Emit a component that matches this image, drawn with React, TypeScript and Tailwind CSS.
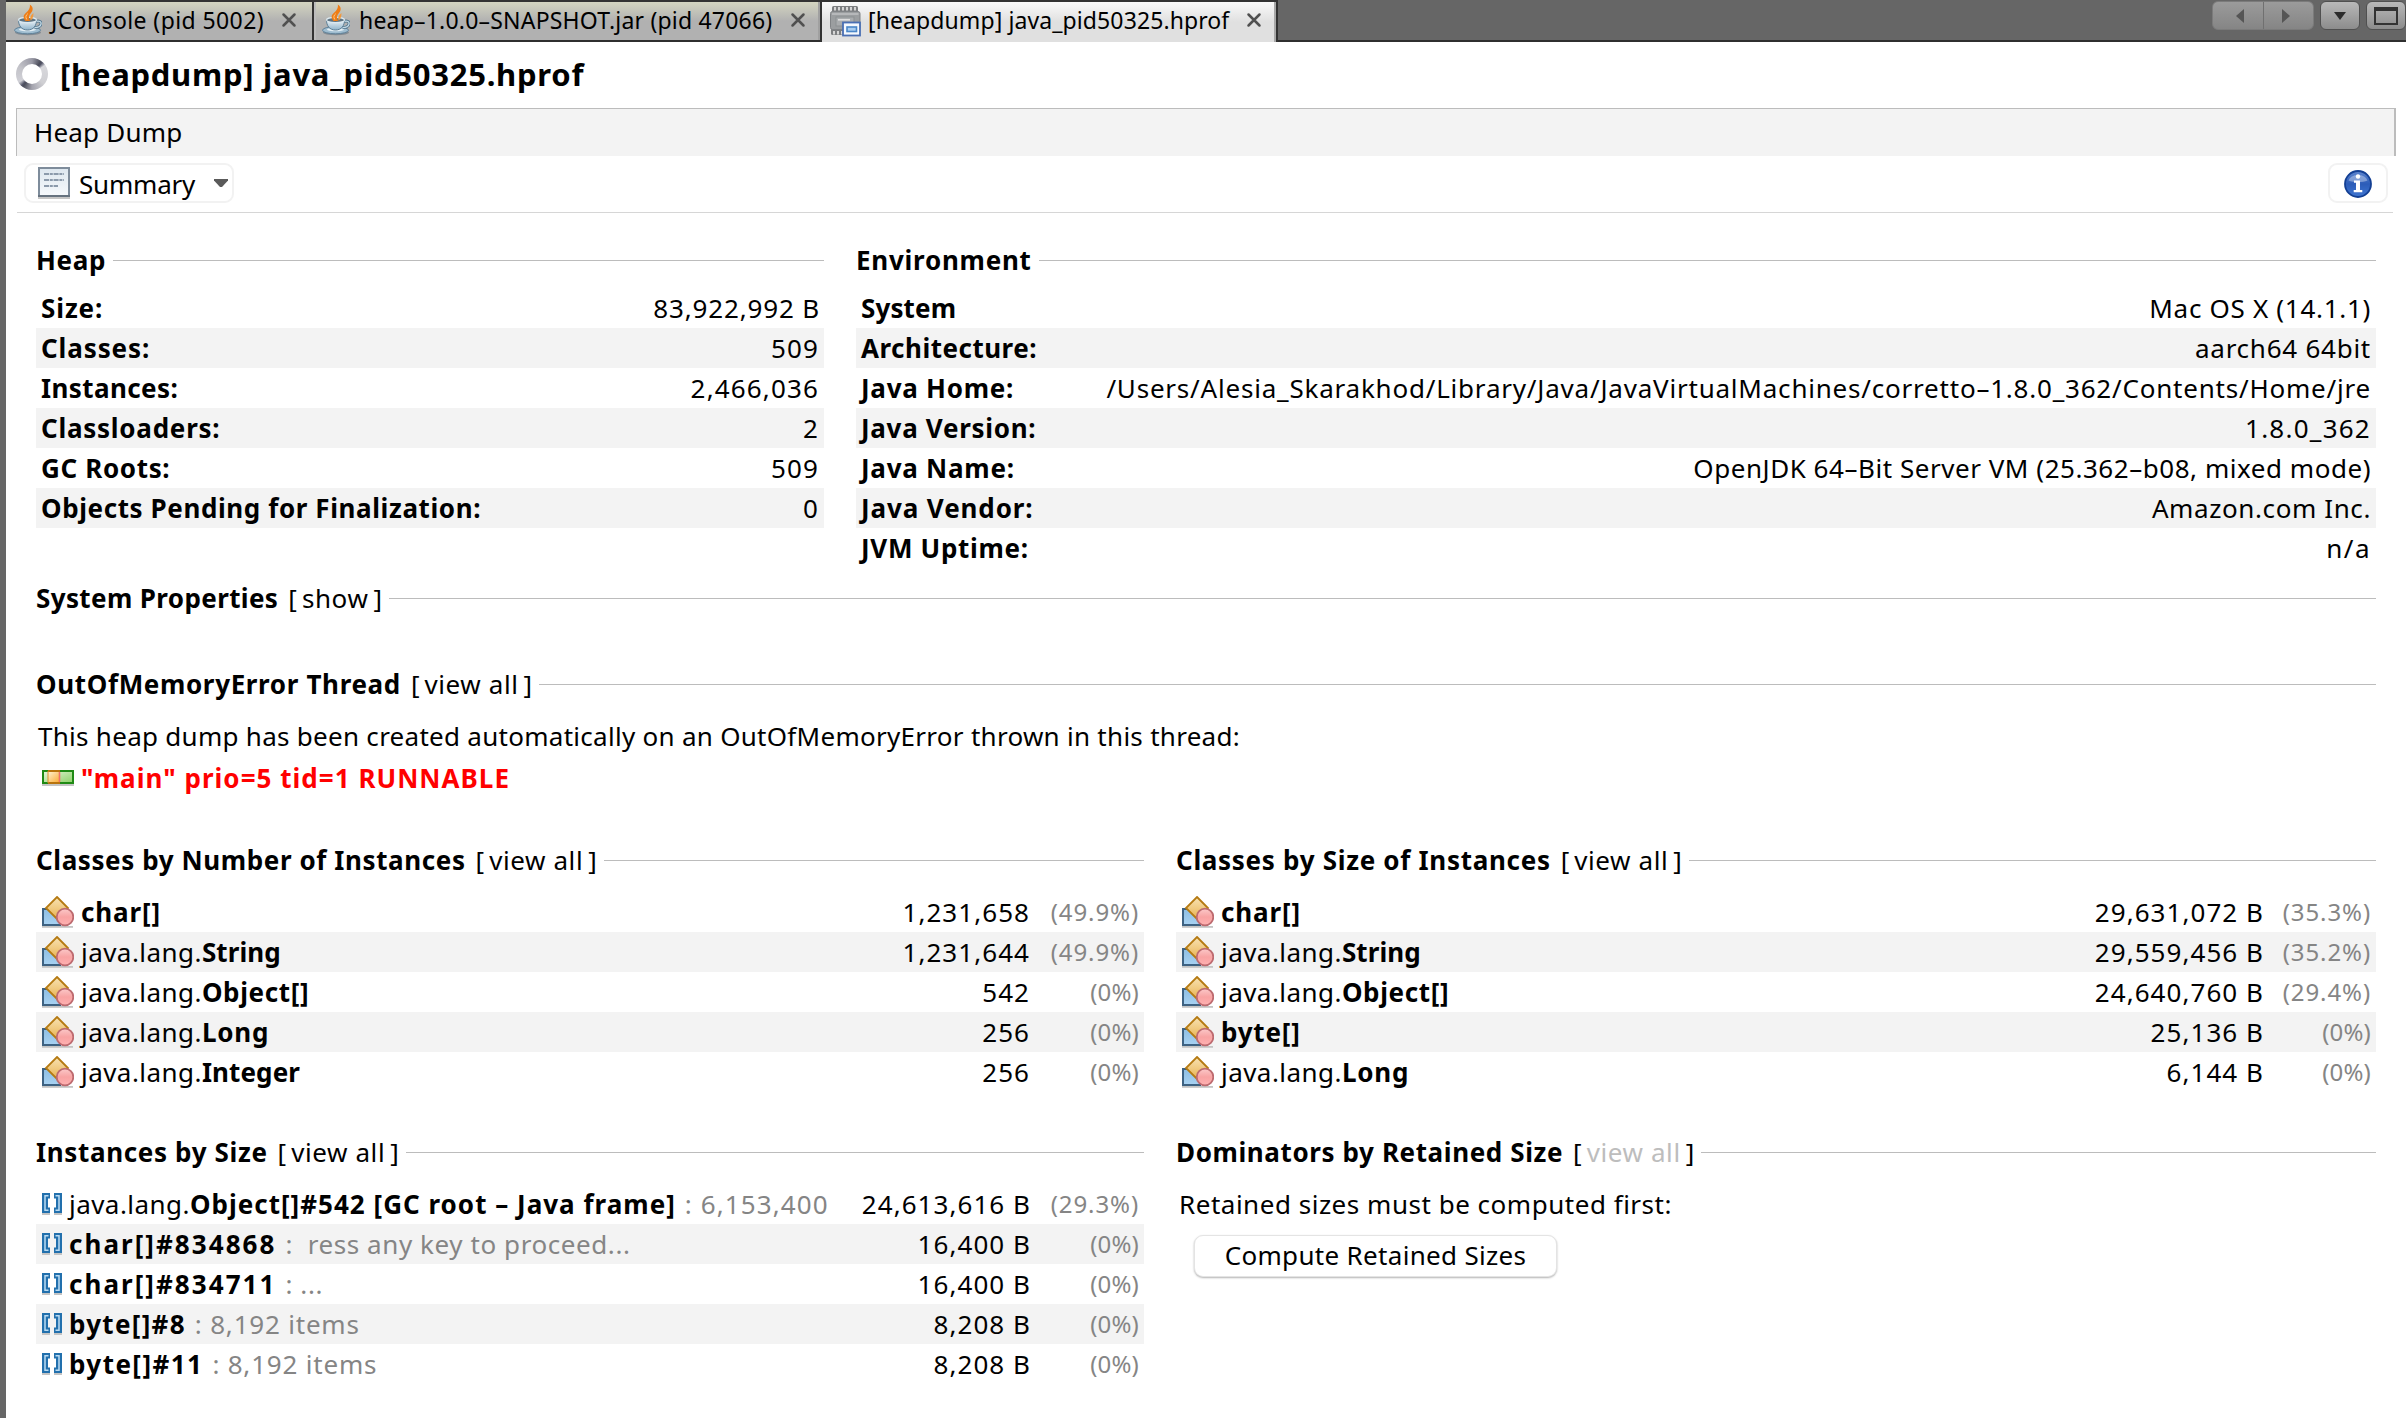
import type { ReactNode } from "react";

/* ---------- icons ---------- */

function JavaCup({ className = "" }: { className?: string }) {
  return (
    <svg width="28" height="32" viewBox="0 0 28 32" className={"shrink-0 " + className}>
      <defs>
        <linearGradient id="cup" x1="0" y1="0" x2="0" y2="1">
          <stop offset="0" stopColor="#eef5f9" />
          <stop offset="1" stopColor="#8fb4cb" />
        </linearGradient>
      </defs>
      <ellipse cx="14" cy="28.4" rx="13" ry="2.8" fill="#6f7b84" opacity="0.7" />
      <ellipse cx="13.5" cy="26.2" rx="13" ry="3.6" fill="#9fbdd0" stroke="#5f8199" strokeWidth="1" />
      <ellipse cx="13.5" cy="25.4" rx="8.5" ry="1.8" fill="#e3eef4" />
      <path d="M21.5 17.5c4-1.2 6 .2 5.5 2.6-.4 2-3 3.4-6.5 3.6" fill="none" stroke="#55788f" strokeWidth="3" />
      <path d="M21.5 17.5c4-1.2 6 .2 5.5 2.6-.4 2-3 3.4-6.5 3.6" fill="none" stroke="#c3dae7" strokeWidth="1.3" />
      <path d="M4.5 16c0 5.5 2.8 10 9 10s9-4.5 9-10z" fill="url(#cup)" stroke="#5d7f96" strokeWidth="1" />
      <ellipse cx="13.5" cy="16" rx="9" ry="2.6" fill="#5f7483" stroke="#dbe8ef" strokeWidth="1.2" />
      <path d="M11.5 17c-2.8-3.2-2.3-6 .8-8.4C14.5 6.8 16.5 3.8 15.800.6c3.8 2.2 3.6 6 .8 9-1.8 2-2.2 4-.6 7.400z" fill="#ee7d16" />
      <path d="M16.8 16.8c-1.4-2.8-.6-5 2.600-7.800.2 2.400-.2 5.200-2.600 7.800z" fill="#f39a3c" />
      <path d="M12.800 15.500c-1.600-2.300-1-4.300 1-5.800" fill="none" stroke="#fbc98a" strokeWidth="1" />
    </svg>
  );
}

function HeapChip() {
  return (
    <svg width="31" height="31" viewBox="0 0 31 31" className="shrink-0">
      <rect x="2" y="0" width="26" height="7" rx="1.5" fill="#7c7e80" />
      {[4, 8, 12, 16, 20, 24].map((x) => (
        <rect key={x} x={x} y="1" width="2" height="3.500" fill="#d6d6d6" />
      ))}
      <rect x="1" y="22" width="26" height="7" rx="1.5" fill="#7c7e80" />
      {[3, 7, 11].map((x) => (
        <rect key={x} x={x} y="25" width="2" height="3.500" fill="#d6d6d6" />
      ))}
      <rect x="0.5" y="5.5" width="29.5" height="18" rx="2" fill="#9b9ea0" stroke="#808386" />
      <rect x="2" y="7" width="26.5" height="2" fill="#b6b8ba" />
      <rect x="6" y="11" width="18" height="9" fill="#a9acae" stroke="#8c8f91" />
      <rect x="8" y="13" width="12" height="1.6" fill="#dcdcdc" />
      <rect x="13" y="16.500" width="17" height="13" fill="#f4f8fd" stroke="#4a6fb3" strokeWidth="1.8" />
      <rect x="17" y="21" width="9.500" height="4.500" fill="#a9cdf0" stroke="#4a86c8" strokeWidth="1.6" />
    </svg>
  );
}

function CloseX({ className = "" }: { className?: string }) {
  return (
    <svg width="16" height="16" viewBox="0 0 16 16" className={"shrink-0 " + className}>
      <path d="M2.500 2.500l11 11M13.500 2.500l-11 11" stroke="#505050" strokeWidth="2.5" strokeLinecap="round" />
    </svg>
  );
}

function SummaryIcon() {
  return (
    <svg width="32" height="32" viewBox="0 0 32 32" className="shrink-0">
      <defs>
        <linearGradient id="page" x1="0" y1="0" x2="0" y2="1">
          <stop offset="0" stopColor="#dde7ef" />
          <stop offset="1" stopColor="#f6f9fc" />
        </linearGradient>
      </defs>
      <rect x="0" y="30" width="32" height="2" fill="#c6c6c6" />
      <rect x="1" y="1" width="30" height="28" fill="url(#page)" stroke="#7e8c9b" strokeWidth="2" />
      <path d="M0 29h32" stroke="#66727f" strokeWidth="2" />
      <path d="M6 7h20M6 13h20M6 19h14" stroke="#8b9aab" strokeWidth="2" strokeDasharray="5 .8 3 .8" />
    </svg>
  );
}

function InfoIcon() {
  return (
    <svg width="28" height="28" viewBox="0 0 28 28">
      <defs>
        <linearGradient id="info" x1="0" y1="0" x2="0" y2="1">
          <stop offset="0" stopColor="#5f86cf" />
          <stop offset="0.5" stopColor="#2c5cb8" />
          <stop offset="1" stopColor="#3f76d2" />
        </linearGradient>
      </defs>
      <circle cx="14" cy="14" r="13" fill="url(#info)" stroke="#133f93" strokeWidth="1.8" />
      <path d="M4.5 10.5a10 8 0 0 1 19 0c-5 2-14 2-19 0z" fill="#fff" opacity="0.35" />
      <circle cx="14" cy="6.5" r="2.2" fill="#fff" />
      <path d="M10 10.5h6v9.500h2.300v2.300H9.700V20H12v-7.200h-2z" fill="#fff" />
    </svg>
  );
}

function ClassIcon() {
  return (
    <svg width="32" height="32" viewBox="0 0 32 32" className="shrink-0">
      <defs>
        <linearGradient id="sq" x1="0" y1="0" x2="0" y2="1">
          <stop offset="0" stopColor="#8fbfe3" />
          <stop offset="1" stopColor="#a8d2f2" />
        </linearGradient>
        <linearGradient id="dia" x1="0" y1="0" x2="0" y2="1">
          <stop offset="0" stopColor="#f8e3b4" />
          <stop offset="1" stopColor="#e9b250" />
        </linearGradient>
        <linearGradient id="cir" x1="0" y1="0" x2="0" y2="1">
          <stop offset="0" stopColor="#fbc9c9" />
          <stop offset="0.5" stopColor="#f8a3a3" />
          <stop offset="1" stopColor="#ffb1b1" />
        </linearGradient>
      </defs>
      <path d="M0 30h31v1.800H0z" fill="#c4c4c4" />
      <rect x="1" y="13" width="17" height="16" fill="url(#sq)" stroke="#3d6282" strokeWidth="2" />
      <path d="M15 1L26 12 15 23 4 12z" fill="url(#dia)" stroke="#b57a12" strokeWidth="1.8" />
      <circle cx="23" cy="21" r="8.3" fill="url(#cir)" stroke="#bd6a6f" strokeWidth="1.8" />
    </svg>
  );
}

function ArrayIcon() {
  return (
    <svg width="20" height="22" viewBox="0 0 20 22" className="shrink-0">
      <path d="M0 20h8v2H0zM12 20h8v2h-8z" fill="#c4c4c4" />
      <path d="M0 0h8v5.500H6v9h2V20H0zM20 0h-8v5.500h2v9h-2V20h8z" fill="#2270ad" />
      <path d="M6.500 2.700H3v14.600h3.500M13.500 2.700H17v14.600h-3.500" fill="none" stroke="#bcdcf3" strokeWidth="1.5" />
    </svg>
  );
}

function ThreadIcon() {
  return (
    <svg width="32" height="16" viewBox="0 0 32 16" className="shrink-0">
      <defs>
        <linearGradient id="thr" x1="0" y1="0" x2="1" y2="1">
          <stop offset="0" stopColor="#e6f7dc" />
          <stop offset="1" stopColor="#8bd067" />
        </linearGradient>
        <linearGradient id="org" x1="0" y1="0" x2="1" y2="1">
          <stop offset="0" stopColor="#fff0cf" />
          <stop offset="1" stopColor="#fbaf3a" />
        </linearGradient>
      </defs>
      <path d="M0 14h32v2H0z" fill="#c4c4c4" />
      <rect x="1" y="1" width="30" height="12" fill="url(#thr)" stroke="#1f8a14" strokeWidth="2" />
      <rect x="6" y="2" width="11" height="10" fill="url(#org)" />
      <path d="M6 1h12M6 13h12" stroke="#b8730c" strokeWidth="2" />
      <path d="M6 1v12" stroke="#d9912c" strokeWidth="1" />
      <path d="M17.500 2v10" stroke="#f0706a" strokeWidth="1.6" />
    </svg>
  );
}

/* ---------- tab strip ---------- */

function TabStrip() {
  const idle = "bg-[linear-gradient(#d4d5c1_0,#b1b1b1_50%,#b1b1b1)] border-b-2 border-b-[#2f2f2f]";
  return (
    <div className="flex h-[42px] bg-[#666] text-[23px] leading-[36px] whitespace-nowrap">
      <div className={"flex w-[308px] border-t-2 border-r-2 border-t-[#333] border-r-[#333] pl-2 " + idle}>
        <JavaCup className="mt-[2px]" />
        <span className="ml-[9px] tracking-[0.4px]">JConsole (pid 5002)</span>
        <CloseX className="mt-[10px] ml-[17px]" />
      </div>
      <div className={"flex w-[508px] border-t-2 border-r-2 border-t-[#333] border-r-[#333] pl-2 shadow-[inset_2px_0_0_#bcbcbc,inset_-2px_0_0_#a0a0a0] " + idle}>
        <JavaCup className="mt-[2px]" />
        <span className="ml-[9px] tracking-[0.2px]">heap–1.0.0–SNAPSHOT.jar (pid 47066)</span>
        <CloseX className="mt-[10px] ml-[18px]" />
      </div>
      <div className="flex w-[456px] border-t-2 border-r-2 border-[#333] bg-[linear-gradient(#fafafa_0,#e0e0e0_50%,#e0e0e0)] pl-2 shadow-[inset_-2px_0_0_#a8a8a8]">
        <span className="mt-[4px]"><HeapChip /></span>
        <span className="ml-[7px] tracking-[0.1px]">[heapdump] java_pid50325.hprof</span>
        <CloseX className="mt-[10px] ml-[17px]" />
      </div>
      <div className="flex flex-1 justify-end border-b-2 border-[#2f2f2f]">
        <div className="mt-px flex h-[29px] w-[102px] rounded-[6px] border border-[#7b7b7b] bg-[linear-gradient(#9b9b9b,#858585)]">
          <div className="flex flex-1 items-center justify-center border-r border-[#707070]">
            <svg width="8" height="14" viewBox="0 0 8 14" className="ml-[4px]"><path d="M8 0v14L0 7z" fill="#555" /></svg>
          </div>
          <div className="flex flex-1 items-center justify-center">
            <svg width="8" height="14" viewBox="0 0 8 14" className="mr-[4px]"><path d="M0 0v14l8-7z" fill="#555" /></svg>
          </div>
        </div>
        <div className="mt-px ml-[6px] flex h-[29px] w-[40px] items-center justify-center rounded-[6px] border border-[#505050] bg-[linear-gradient(#b9b9b9,#8c8c8c)]">
          <svg width="12" height="8" viewBox="0 0 12 8"><path d="M0 0h12L6 8z" fill="#2c2c2c" /></svg>
        </div>
        <div className="mt-px ml-[6px] flex h-[29px] w-[40px] items-center justify-center rounded-[6px] border border-[#505050] bg-[linear-gradient(#b9b9b9,#8c8c8c)]">
          <div className="h-[18px] w-[24px] border-2 border-t-4 border-[#333]" />
        </div>
      </div>
    </div>
  );
}

/* ---------- page header ---------- */

function Header() {
  return (
    <>
      <div className="mt-[12px] ml-[10px] flex h-[40px] items-center">
        <div className="flex size-8 items-center justify-center rounded-full bg-[conic-gradient(#9a9aa6_0deg,#4a4c5a_36deg,#55576a_42deg,#d8d8dc_56deg,#cfcfd3_130deg,#a4a4ae_180deg,#4a4c5a_216deg,#55576a_222deg,#d0d0d6_238deg,#c2c2c8_300deg,#9a9aa6_360deg)]">
          <div className="size-[20px] rounded-full bg-white" />
        </div>
        <h1 className="ml-[12px] text-[31px] leading-[40px] font-bold tracking-[0.74px]">[heapdump] java_pid50325.hprof</h1>
      </div>
      <div className="mt-[14px] mr-[10px] ml-[10px] h-[48px] border-t border-r-2 border-l border-[#bcbcbc] bg-[#f3f3f3] pl-[17px] leading-[46px] tracking-[0.2px]">
        Heap Dump
      </div>
      <div className="mr-[13px] ml-[11px] flex h-[57px] items-start justify-between border-b border-[#d6d6d6] pt-[7px]">
        <div className="ml-[7px] flex h-[40px] w-[210px] items-center rounded-[9px] border-2 border-[#f2f2f2] pl-[12px]">
          <SummaryIcon />
          <span className="mt-[2px] ml-[9px] leading-[40px] tracking-[-0.2px]">Summary</span>
          <svg width="14" height="8" viewBox="0 0 14 8" className="ml-[19px]"><path d="M0 0h14v1.500L8 8H6L0 1.500z" fill="#5a5a5a" /></svg>
        </div>
        <div className="mr-[5px] flex h-[40px] w-[60px] items-center justify-center rounded-[9px] border-2 border-[#f2f2f2] pt-px">
          <InfoIcon />
        </div>
      </div>
    </>
  );
}

/* ---------- sections ---------- */

function Heading({ title, track, link, muted }: { title: string; track: string; link?: string; muted?: boolean }) {
  return (
    <div className="flex h-[40px] items-center leading-[40px] whitespace-nowrap">
      <h2 className={"font-bold " + track}>{title}</h2>
      {link && (
        <>
          <span className="ml-[10px]">[</span>
          <span className={"ml-[5px] tracking-[0.6px] " + (muted ? "text-[#bdbdbd]" : "")}>{link}</span>
          <span className="ml-[5px]">]</span>
        </>
      )}
      <div className="ml-[7px] h-px flex-1 bg-[#bcbcbc]" />
    </div>
  );
}

type Fact = { label: string; track: string; value: string; valueTrack: string };

function Facts({ rows }: { rows: Fact[] }) {
  return (
    <div className="mt-[8px]">
      {rows.map((r) => (
        <div key={r.label} className="flex h-[40px] justify-between px-[5px] leading-[40px] whitespace-nowrap even:bg-[#f3f3f3]">
          <span className={"font-bold " + r.track}>{r.label}</span>
          <span className={r.valueTrack}>{r.value}</span>
        </div>
      ))}
    </div>
  );
}

type Item = { pkg?: string; name: string; track: string; note?: ReactNode; value: string; share: string };

function Items({ rows, icon, shareWidth }: { rows: Item[]; icon: ReactNode; shareWidth: string }) {
  return (
    <div className="mt-[12px]">
      {rows.map((r) => (
        <div key={r.name} className="flex h-[40px] items-center pr-[5px] pl-[6px] leading-[40px] whitespace-nowrap even:bg-[#f3f3f3]">
          {icon}
          <span className="ml-[7px]">
            {r.pkg && <span className="tracking-[0.45px]">{r.pkg}</span>}
            <span className={"font-bold " + r.track}>{r.name}</span>
          </span>
          {r.note}
          <span className="ml-auto tracking-[1.05px]">{r.value}</span>
          <span className={"text-right text-[24px] text-[#858585] " + shareWidth + (r.share.length > 4 ? " tracking-[0.9px]" : " tracking-[0.2px]")}>{r.share}</span>
        </div>
      ))}
    </div>
  );
}

const heap: Fact[] = [
  { label: "Size:", track: "tracking-[0.9px]", value: "83,922,992 B", valueTrack: "tracking-[0.85px] -mr-px" },
  { label: "Classes:", track: "tracking-[0.9px]", value: "509", valueTrack: "tracking-[1.1px]" },
  { label: "Instances:", track: "tracking-[0.4px]", value: "2,466,036", valueTrack: "tracking-[1.15px]" },
  { label: "Classloaders:", track: "tracking-[0.75px]", value: "2", valueTrack: "tracking-[1.1px]" },
  { label: "GC Roots:", track: "tracking-[0.65px]", value: "509", valueTrack: "tracking-[1.1px]" },
  { label: "Objects Pending for Finalization:", track: "tracking-[0.6px]", value: "0", valueTrack: "tracking-[1.1px]" },
];

const environment: Fact[] = [
  { label: "System", track: "tracking-[0.12px]", value: "Mac OS X (14.1.1)", valueTrack: "tracking-[0.7px]" },
  { label: "Architecture:", track: "tracking-[0.5px]", value: "aarch64 64bit", valueTrack: "tracking-[0.75px]" },
  { label: "Java Home:", track: "tracking-[0.75px]", value: "/Users/Alesia_Skarakhod/Library/Java/JavaVirtualMachines/corretto–1.8.0_362/Contents/Home/jre", valueTrack: "tracking-[0.79px]" },
  { label: "Java Version:", track: "tracking-[0.7px]", value: "1.8.0_362", valueTrack: "tracking-[1.25px]" },
  { label: "Java Name:", track: "tracking-[0.75px]", value: "OpenJDK 64–Bit Server VM (25.362–b08, mixed mode)", valueTrack: "tracking-[0.54px]" },
  { label: "Java Vendor:", track: "tracking-[0.9px]", value: "Amazon.com Inc.", valueTrack: "tracking-[0.6px]" },
  { label: "JVM Uptime:", track: "tracking-[0.7px]", value: "n/a", valueTrack: "tracking-[1.5px]" },
];

const byCount: Item[] = [
  { name: "char[]", track: "tracking-[0.9px]", value: "1,231,658", share: "(49.9%)" },
  { pkg: "java.lang.", name: "String", track: "tracking-[0.1px]", value: "1,231,644", share: "(49.9%)" },
  { pkg: "java.lang.", name: "Object[]", track: "tracking-[0.65px]", value: "542", share: "(0%)" },
  { pkg: "java.lang.", name: "Long", track: "tracking-[0.8px]", value: "256", share: "(0%)" },
  { pkg: "java.lang.", name: "Integer", track: "tracking-[0.1px]", value: "256", share: "(0%)" },
];

const bySize: Item[] = [
  { name: "char[]", track: "tracking-[0.9px]", value: "29,631,072 B", share: "(35.3%)" },
  { pkg: "java.lang.", name: "String", track: "tracking-[0.1px]", value: "29,559,456 B", share: "(35.2%)" },
  { pkg: "java.lang.", name: "Object[]", track: "tracking-[0.65px]", value: "24,640,760 B", share: "(29.4%)" },
  { name: "byte[]", track: "tracking-[0.8px]", value: "25,136 B", share: "(0%)" },
  { pkg: "java.lang.", name: "Long", track: "tracking-[0.8px]", value: "6,144 B", share: "(0%)" },
];

function Note({ children, track }: { children: ReactNode; track: string }) {
  return <span className={"ml-[9px] whitespace-pre text-[#858585] " + track}>{children}</span>;
}

const instances: Item[] = [
  { pkg: "java.lang.", name: "Object[]#542 [GC root – Java frame]", track: "tracking-[1.02px]", note: <Note track="tracking-[1.1px]">: 6,153,400</Note>, value: "24,613,616 B", share: "(29.3%)" },
  { name: "char[]#834868", track: "tracking-[2.05px]", note: <Note track="tracking-[0.58px]">{":  ress any key to proceed..."}</Note>, value: "16,400 B", share: "(0%)" },
  { name: "char[]#834711", track: "tracking-[2.05px]", note: <Note track="tracking-[0.6px]">: ...</Note>, value: "16,400 B", share: "(0%)" },
  { name: "byte[]#8", track: "tracking-[1.3px]", note: <Note track="tracking-[0.8px]">: 8,192 items</Note>, value: "8,208 B", share: "(0%)" },
  { name: "byte[]#11", track: "tracking-[1.45px]", note: <Note track="tracking-[0.8px]">: 8,192 items</Note>, value: "8,208 B", share: "(0%)" },
];

export default function App() {
  return (
    <div className="h-[1418px] w-[2406px] overflow-hidden border-l-[6px] border-[#666] bg-white font-['Noto_Sans','Open_Sans',sans-serif] text-[26px] text-black">
      <TabStrip />
      <Header />
      <main className="mt-[27px] mr-[30px] ml-[30px]">
        <div className="flex gap-[32px]">
          <section className="w-[788px]">
            <Heading title="Heap" track="tracking-[0.7px]" />
            <Facts rows={heap} />
          </section>
          <section className="flex-1">
            <Heading title="Environment" track="tracking-[0.75px]" />
            <Facts rows={environment} />
          </section>
        </div>

        <section className="mt-[10px]">
          <Heading title="System Properties" track="tracking-[0.38px]" link="show" />
        </section>

        <section className="mt-[46px]">
          <Heading title="OutOfMemoryError Thread" track="tracking-[0.65px]" link="view all" />
          <p className="mt-[12px] pl-[2px] leading-[40px] tracking-[0.28px]">
            This heap dump has been created automatically on an OutOfMemoryError thrown in this thread:
          </p>
          <div className="mt-[2px] flex h-[40px] items-center pl-[6px] leading-[40px] font-bold text-[#ff0000]">
            <ThreadIcon />
            <span className="ml-[7px] tracking-[1.03px]">"main" prio=5 tid=1 RUNNABLE</span>
          </div>
        </section>

        <div className="mt-[42px] grid grid-cols-[1108px_1200px] gap-x-[32px] gap-y-[40px]">
          <section>
            <Heading title="Classes by Number of Instances" track="tracking-[0.6px]" link="view all" />
            <Items rows={byCount} icon={<ClassIcon />} shareWidth="w-[109px]" />
          </section>
          <section>
            <Heading title="Classes by Size of Instances" track="tracking-[0.7px]" link="view all" />
            <Items rows={bySize} icon={<ClassIcon />} shareWidth="w-[107px]" />
          </section>
          <section>
            <Heading title="Instances by Size" track="tracking-[0.65px]" link="view all" />
            <Items rows={instances} icon={<ArrayIcon />} shareWidth="w-[108px]" />
          </section>
          <section>
            <Heading title="Dominators by Retained Size" track="tracking-[0.61px]" link="view all" muted />
            <p className="mt-[12px] pl-[3px] leading-[40px] tracking-[0.52px]">Retained sizes must be computed first:</p>
            <button className="mt-[11px] ml-[18px] block h-[42px] w-[363px] rounded-[9px] border border-[#e4e4e4] bg-white pb-[2px] text-center leading-[38px] tracking-[0.32px] shadow-[0_1px_2px_rgba(0,0,0,0.3)]">
              Compute Retained Sizes
            </button>
          </section>
        </div>
      </main>
    </div>
  );
}
